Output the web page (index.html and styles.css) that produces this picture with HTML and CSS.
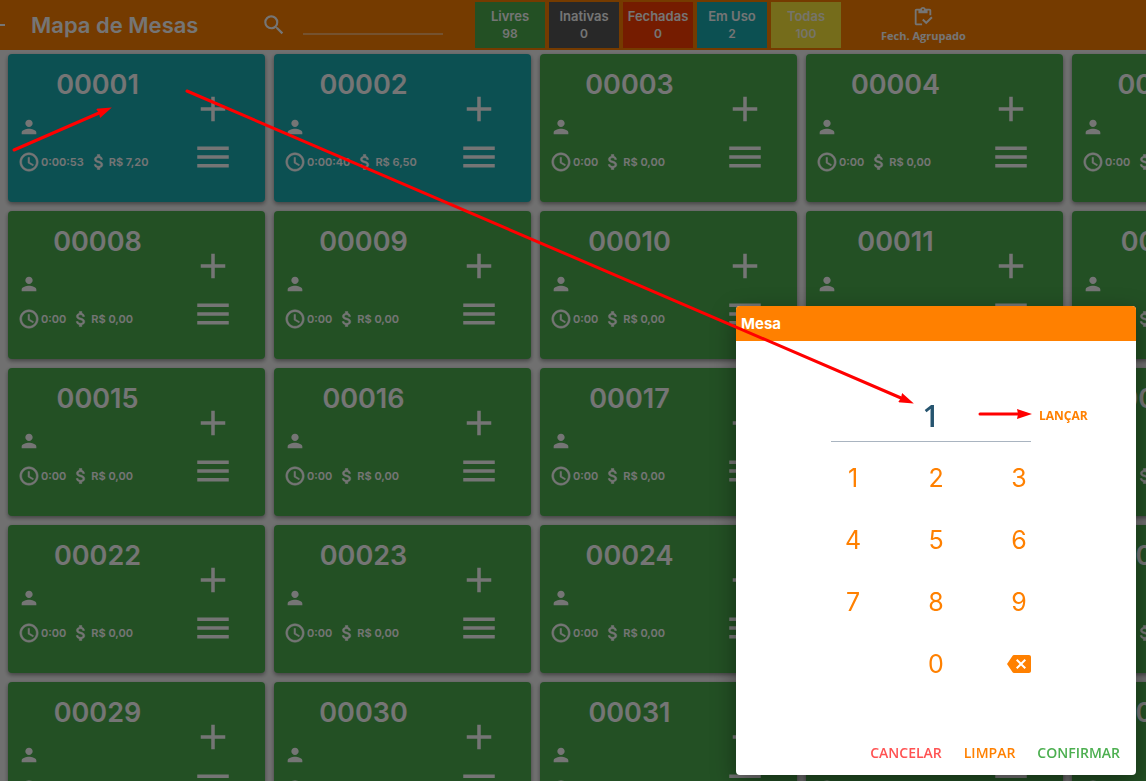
FILE: index.html
```html
<!DOCTYPE html>
<html lang="pt-BR">

<head>
    <meta charset="UTF-8">
    <meta name="viewport" content="width=device-width, initial-scale=1.0">
    <title>Mapa de Mesas</title>
    <link rel="stylesheet" href="styles.css">
</head>

<body>
    <!-- icones -->
    <svg class="sprite" aria-hidden="true">
        <symbol id="i-back" viewBox="0 0 24 24"><path d="M20 11H7.83l5.59-5.59L12 4l-8 8 8 8 1.41-1.41L7.83 13H20v-2z"/></symbol>
        <symbol id="i-search" viewBox="0 0 24 24"><path d="M15.5 14h-.79l-.28-.27A6.47 6.47 0 0 0 16 9.5 6.5 6.5 0 1 0 9.5 16c1.61 0 3.09-.59 4.23-1.57l.27.28v.79l5 4.99L20.49 19l-4.99-5zm-6 0C7.01 14 5 11.99 5 9.5S7.01 5 9.5 5 14 7.01 14 9.5 11.99 14 9.5 14z"/></symbol>
        <symbol id="i-check" viewBox="0 0 24 24"><path d="M5 5h2v3h10V5h2v5h2V5c0-1.1-.9-2-2-2h-4.18C14.4 1.84 13.3 1 12 1s-2.4.84-2.82 2H5c-1.1 0-2 .9-2 2v14c0 1.1.9 2 2 2h6v-2H5V5zm7-2c.55 0 1 .45 1 1s-.45 1-1 1-1-.45-1-1 .45-1 1-1z"/><path d="M21 11.5 15.51 17l-3.01-3-1.5 1.5 4.51 4.5 6.99-7z"/></symbol>
        <symbol id="i-person" viewBox="0 0 24 24"><path d="M12 12c2.21 0 4-1.79 4-4s-1.79-4-4-4-4 1.79-4 4 1.79 4 4 4zm0 2c-2.67 0-8 1.34-8 4v2h16v-2c0-2.66-5.33-4-8-4z"/></symbol>
        <symbol id="i-clock" viewBox="0 0 24 24"><path d="M11.99 2C6.47 2 2 6.48 2 12s4.47 10 9.99 10C17.52 22 22 17.52 22 12S17.52 2 11.99 2zM12 20c-4.42 0-8-3.58-8-8s3.58-8 8-8 8 3.58 8 8-3.58 8-8 8zm.5-13H11v6l5.25 3.15.75-1.23-4.5-2.67z"/></symbol>
        <symbol id="i-money" viewBox="0 0 24 24"><path d="M11.8 10.9c-2.27-.59-3-1.2-3-2.15 0-1.09 1.01-1.85 2.7-1.85 1.78 0 2.44.85 2.5 2.1h2.21c-.07-1.72-1.12-3.3-3.21-3.81V3h-3v2.16c-1.94.42-3.5 1.68-3.5 3.61 0 2.31 1.91 3.46 4.7 4.13 2.5.6 3 1.48 3 2.41 0 .69-.49 1.79-2.7 1.79-2.06 0-2.87-.92-2.98-2.1h-2.2c.12 2.19 1.76 3.42 3.68 3.83V21h3v-2.15c1.95-.37 3.5-1.5 3.5-3.55 0-2.84-2.43-3.81-4.7-4.4z"/></symbol>
        <symbol id="i-add" viewBox="0 0 24 24"><path d="M19 13h-6v6h-2v-6H5v-2h6V5h2v6h6v2z"/></symbol>
        <symbol id="i-menu" viewBox="0 0 24 24"><path d="M3 18h18v-2H3v2zm0-5h18v-2H3v2zm0-7v2h18V6H3z"/></symbol>
        <symbol id="i-backspace" viewBox="0 0 24 24"><path d="M22 3H7c-.69 0-1.23.35-1.59.88L0 12l5.41 8.11c.36.53.9.89 1.59.89h15c1.1 0 2-.9 2-2V5c0-1.1-.9-2-2-2zm-3 12.59L17.59 17 14 13.41 10.41 17 9 15.59 12.59 12 9 8.41 10.41 7 14 10.59 17.59 7 19 8.41 15.41 12 19 15.59z"/></symbol>
    </svg>

    <!-- topo -->
    <header class="topbar">
        <button class="back" aria-label="Voltar"><svg><use href="#i-back"/></svg></button>
        <h1>Mapa de Mesas</h1>
        <label class="search">
            <svg><use href="#i-search"/></svg>
            <input type="text" aria-label="Pesquisar mesa">
        </label>
        <div class="status">
            <button class="livres">Livres<span>98</span></button>
            <button class="inativas">Inativas<span>0</span></button>
            <button class="fechadas">Fechadas<span>0</span></button>
            <button class="em-uso">Em Uso<span>2</span></button>
            <button class="todas">Todas<span>100</span></button>
        </div>
        <button class="agrupado"><svg><use href="#i-check"/></svg>Fech. Agrupado</button>
    </header>

    <!-- mesas, preenchidas no script.js -->
    <main class="mesas" id="mesas"></main>

    <div class="backdrop"></div>

    <!-- teclado -->
    <section class="dialog" role="dialog" aria-labelledby="dialog-title">
        <h2 id="dialog-title">Mesa</h2>
        <div class="entry">
            <input type="text" value="1" aria-label="Número da mesa">
            <button class="lancar">LANÇAR</button>
        </div>
        <div class="keys">
            <button>1</button>
            <button>2</button>
            <button>3</button>
            <button>4</button>
            <button>5</button>
            <button>6</button>
            <button>7</button>
            <button>8</button>
            <button>9</button>
            <button class="zero">0</button>
            <button aria-label="Apagar"><svg><use href="#i-backspace"/></svg></button>
        </div>
        <div class="actions">
            <button class="cancelar">CANCELAR</button>
            <button class="limpar">LIMPAR</button>
            <button class="confirmar">CONFIRMAR</button>
        </div>
    </section>

    <!-- setas -->
    <svg class="arrows" width="1146" height="781" aria-hidden="true">
        <defs>
            <marker id="head" markerUnits="userSpaceOnUse" markerWidth="16" markerHeight="10" refX="1" refY="5" orient="auto">
                <path d="M0 0 15 5 0 10 1 5z" fill="#f00"/>
            </marker>
        </defs>
        <path d="M14 150 99 113"/>
        <path d="M187 91 901 398"/>
        <path d="M980 414H1018"/>
    </svg>

    <script src="script.js"></script>
</body>

</html>
```
FILE: styles.css
```css
* {
    box-sizing: border-box;
    margin: 0;
    padding: 0;
}

body {
    height: 100vh;
    overflow: hidden;
    background-color: #f4f4f4;
    font-family: Inter, "Liberation Sans", sans-serif;
    color: #fff;
}

button,
input {
    font: inherit;
    color: inherit;
    border: none;
    background: none;
    outline: none;
}

button {
    cursor: pointer;
}

svg {
    display: block;
    flex-shrink: 0;
    fill: currentColor;
}

.sprite {
    position: absolute;
    width: 0;
    height: 0;
}

/* topo */
.topbar {
    display: flex;
    align-items: center;
    height: 50px;
    background-color: #ff8000;
}

.back {
    margin-left: -15px;
}

.back svg {
    width: 24px;
    height: 24px;
}

.topbar h1 {
    width: 232px;
    padding-left: 22px;
    font-size: 22px;
    line-height: 32px;
    font-weight: 600;
    white-space: nowrap;
}

.search {
    display: flex;
    align-items: center;
    gap: 16px;
    margin-left: 20px;
}

.search svg {
    width: 26px;
    height: 26px;
}

.search input {
    width: 140px;
    height: 20px;
    border-bottom: 2px solid rgba(255, 255, 255, .4);
}

.status {
    display: flex;
    gap: 4px;
    margin-left: 32px;
}

.status button {
    width: 70px;
    height: 46px;
    font-size: 13px;
    line-height: 17px;
    font-weight: 600;
}

.status span {
    display: block;
    font-size: 12px;
}

.livres {
    background-color: #4caf50;
}

.inativas {
    background-color: #575757;
}

.fechadas {
    background-color: #ff3d00;
}

.em-uso {
    background-color: #1caeb4;
}

.status .todas {
    background-color: #ffeb3b;
    color: rgba(255, 255, 255, .9);
}

.agrupado {
    display: flex;
    flex-direction: column;
    align-items: center;
    margin-left: 40px;
    font-family: "Open Sans", "Noto Sans", sans-serif;
    font-size: 11px;
    line-height: 16px;
    font-weight: 700;
}

.agrupado svg {
    width: 22px;
    height: 22px;
}

/* mesas */
.mesas {
    display: grid;
    grid-template-columns: repeat(7, minmax(257px, 1fr));
    gap: 9px;
    padding: 4px 8px;
}

.mesa {
    display: flex;
    height: 148px;
    border-radius: 4px;
    background-color: #4caf50;
    box-shadow: 0 2px 4px rgba(0, 0, 0, .4);
}

.mesa.ocupada {
    background-color: #1caeb4;
}

.info {
    width: 179px;
    padding: 10px 0 0 10px;
}

.info h3 {
    padding-right: 10px;
    margin-bottom: 10px;
    font-size: 27px;
    line-height: 42px;
    font-weight: 600;
    text-align: center;
}

.info .pessoa,
.info .relogio {
    width: 22px;
    height: 22px;
}

.info .relogio {
    margin-right: 1px;
}

.info .valor {
    width: 20px;
    height: 20px;
    margin-left: 5px;
}

/* relogio e cifrao mais grossos */
.info .relogio,
.info .valor {
    stroke: currentColor;
    stroke-width: .6;
}

.info p {
    display: flex;
    align-items: center;
    margin-top: 13px;
    font-size: 11px;
    line-height: 22px;
    font-weight: 600;
    white-space: nowrap;
}

.opcoes {
    display: flex;
    flex-direction: column;
    align-items: center;
    gap: 6px;
    width: 52px;
    padding-top: 34px;
}

.opcoes svg {
    width: 42px;
    height: 42px;
}

.backdrop {
    position: fixed;
    inset: 0;
    background-color: rgba(0, 0, 0, .54);
}

/* teclado */
.dialog {
    position: fixed;
    right: 10px;
    bottom: 6px;
    width: 400px;
    overflow: hidden;
    border-radius: 4px;
    background-color: #fff;
    box-shadow: 0 8px 24px rgba(0, 0, 0, .4);
    color: #ff8000;
    font-family: "Open Sans", "Noto Sans", sans-serif;
}

.dialog h2 {
    padding-left: 5px;
    background-color: #ff8000;
    color: #fff;
    font-family: Inter, "Liberation Sans", sans-serif;
    font-size: 15px;
    line-height: 35px;
    font-weight: 700;
}

.entry {
    display: flex;
    gap: 8px;
    align-items: center;
    padding: 49px 0 5px 95px;
}

.entry input {
    width: 200px;
    height: 52px;
    border-bottom: 1px solid #a9b4c0;
    color: #26546f;
    font-size: 30px;
    font-weight: 600;
    text-align: center;
}

.lancar {
    font-size: 12px;
    line-height: 20px;
    font-weight: 700;
}

.keys {
    display: grid;
    grid-template-columns: repeat(3, 83px);
    grid-auto-rows: 62px;
    justify-content: center;
    font-family: Inter, "Liberation Sans", sans-serif;
    font-size: 25px;
}

.keys button {
    display: flex;
    align-items: center;
    justify-content: center;
}

.keys .zero {
    grid-column: 2;
}

.keys svg {
    width: 24px;
    height: 24px;
}

.actions {
    display: flex;
    justify-content: flex-end;
    gap: 22px;
    padding: 48px 16px 12px 0;
    font-size: 14px;
    line-height: 20px;
    font-weight: 600;
}

.cancelar {
    color: #ff5252;
}

.confirmar {
    color: #4caf50;
}

/* setas */
.arrows {
    position: absolute;
    top: 0;
    left: 0;
    pointer-events: none;
}

.arrows > path {
    fill: none;
    stroke: #f00;
    stroke-width: 3;
    stroke-linecap: round;
    marker-end: url(#head);
}
```
FILE: script.js
```js
// mesas em uso
const emUso = {
    1: { tempo: '0:00:53', valor: '7,20' },
    2: { tempo: '0:00:40', valor: '6,50' }
};

const lista = document.getElementById('mesas');

for (let i = 1; i <= 35; i++) {
    const uso = emUso[i] || { tempo: '0:00', valor: '0,00' };
    const mesa = document.createElement('article');
    mesa.className = emUso[i] ? 'mesa ocupada' : 'mesa';
    mesa.innerHTML = `
        <div class="info">
            <h3>${String(i).padStart(5, '0')}</h3>
            <svg class="pessoa"><use href="#i-person"/></svg>
            <p>
                <svg class="relogio"><use href="#i-clock"/></svg>${uso.tempo}
                <svg class="valor"><use href="#i-money"/></svg>R$ ${uso.valor}
            </p>
        </div>
        <div class="opcoes">
            <button aria-label="Adicionar"><svg><use href="#i-add"/></svg></button>
            <button aria-label="Menu"><svg><use href="#i-menu"/></svg></button>
        </div>`;
    lista.appendChild(mesa);
}
```
